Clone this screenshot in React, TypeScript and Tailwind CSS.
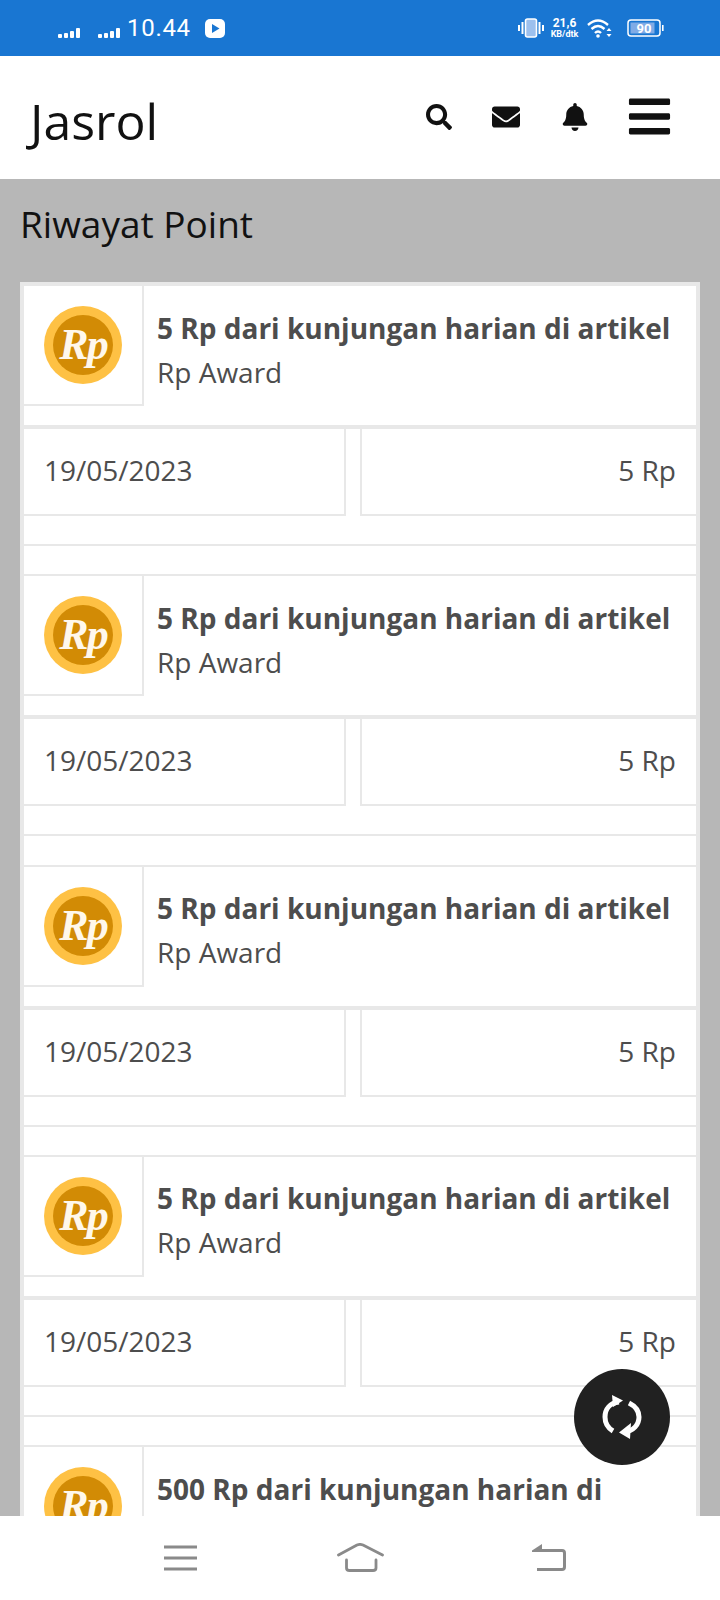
import React from 'react';
import { FaBars, FaBell, FaEnvelope, FaSearch } from 'react-icons/fa';

const rows = [
  { title: '5 Rp dari kunjungan harian di artikel', amount: '5 Rp' },
  { title: '5 Rp dari kunjungan harian di artikel', amount: '5 Rp' },
  { title: '5 Rp dari kunjungan harian di artikel', amount: '5 Rp' },
  { title: '5 Rp dari kunjungan harian di artikel', amount: '5 Rp' },
  { title: '500 Rp dari kunjungan harian di artikel', amount: '500 Rp' },
];

const Signal = () => (
  <svg width="23" height="10" viewBox="0 0 23 10" fill="white">
    <rect x="0" y="6" width="4" height="4" rx="1" />
    <rect x="6" y="5" width="4" height="5" rx="1" />
    <rect x="12" y="3" width="4" height="7" rx="1" />
    <rect x="18" y="0" width="4" height="10" rx="1" />
  </svg>
);

const StatusBar = () => (
  <div className="flex h-14 shrink-0 items-center bg-[#1976d2] pl-[58px] pr-[56px] text-white font-['Roboto',sans-serif]">
    <div className="mt-[10px]"><Signal /></div>
    <div className="ml-[17px] mt-[10px]"><Signal /></div>
    <span className="ml-[6px] text-[24px] font-normal leading-none tracking-[0.7px]">10.44</span>
    <svg className="ml-[14px]" width="20" height="19" viewBox="0 0 20 19">
      <rect width="20" height="19" rx="5" fill="white" />
      <path d="M7 5 L14.5 9.5 L7 14 Z" fill="#1976d2" />
    </svg>
    <div className="flex-1" />
    <svg width="26" height="20" viewBox="0 0 26 20" fill="none">
      <rect x="7.5" y="1" width="11" height="18" rx="2" fill="#9cc0ee" stroke="white" strokeWidth="1.6" />
      <path d="M4.5 4v12M21.5 4v12" stroke="white" strokeWidth="2" />
      <path d="M1 7v6M25 7v6" stroke="white" strokeWidth="2" />
    </svg>
    <div className="ml-[5px] flex w-[31px] flex-col items-center font-bold text-white">
      <span className="text-[12px] leading-[11px]">21,6</span>
      <span className="text-[9px] leading-[10px]">KB/dtk</span>
    </div>
    <svg className="ml-[7px]" width="26" height="20" viewBox="0 0 26 20" fill="none">
      <path d="M1 7 Q11 -2 21 7" stroke="white" strokeWidth="2.4" />
      <path d="M4.5 11 Q11 5 17.5 11" stroke="white" strokeWidth="2.4" />
      <path d="M8 15 Q11 12 14 15" stroke="white" strokeWidth="2.4" />
      <circle cx="11" cy="18" r="1.8" fill="white" />
      <path d="M22 10 l2.5 3 h-5 Z M22 19 l2.5 -3 h-5 Z" fill="white" />
    </svg>
    <svg className="ml-[14px]" width="37" height="18" viewBox="0 0 37 18" fill="none">
      <rect x="1" y="1" width="32" height="16" rx="3" stroke="white" strokeWidth="1.5" />
      <rect x="3.5" y="3.5" width="24" height="11" fill="#7fabe6" />
      <rect x="35" y="6" width="1.6" height="6" fill="white" />
      <text x="17" y="14" textAnchor="middle" fontSize="13" fontWeight="700" fill="white" fontFamily="Roboto, sans-serif">90</text>
    </svg>
  </div>
);

const Header = () => (
  <div className="flex h-[123px] shrink-0 items-center bg-white pl-[30px] pr-[47px] text-[#111111]">
    <span className="mt-[6px] text-[50px] leading-none">Jasrol</span>
    <div className="flex-1" />
    <div className="-mt-[2px] flex items-center">
      <FaSearch size={26} />
      <FaEnvelope size={28} className="ml-[40px]" />
      <FaBell size={28} className="ml-[41px]" />
      <FaBars size={47} className="ml-[37px]" />
    </div>
  </div>
);

const Coin = () => (
  <div className="flex h-[78px] w-[78px] items-center justify-center rounded-full bg-[#fec144]">
    <div className="flex h-[60px] w-[60px] items-center justify-center rounded-full bg-[#d28b05]">
      <span className="text-[44px] font-bold italic leading-none tracking-[-2px] text-[#fff8ec] font-['Liberation_Serif',serif]">Rp</span>
    </div>
  </div>
);

const PointRow = ({ title, amount }: { title: string; amount: string }) => (
  <div>
    <div className="flex h-[139px] items-start">
      <div className="border-b-2 border-r-2 border-[#e8e8e8] p-[20px]">
        <Coin />
      </div>
      <div className="min-w-0 flex-1 pl-[13px] pr-[10px] pt-[19.5px]">
        <p className="text-[28px] font-bold leading-[44px]">{title}</p>
        <p className="text-[28px] leading-[44px]">Rp Award</p>
      </div>
    </div>
    <div className="flex border-t-4 border-[#e8e8e8]">
      <div className="h-[87px] w-[322px] border-b-2 border-r-2 border-[#e8e8e8] pl-[20px] pt-[19px] text-[28px] leading-[45px]">19/05/2023</div>
      <div className="ml-[14px] h-[87px] flex-1 border-b-2 border-l-2 border-[#e8e8e8] pr-[20px] pt-[19px] text-right text-[28px] leading-[45px]">{amount}</div>
    </div>
    <div className="-mx-[2px] h-[30px] border-b-2 border-[#e8e8e8]" />
    <div className="-mx-[2px] h-[30.25px] border-b-2 border-[#e8e8e8]" />
  </div>
);

const NavBar = () => (
  <div className="flex h-[84px] shrink-0 items-start bg-white pl-[164px] pt-[27px]">
    <svg className="mt-[2px]" width="34" height="26" viewBox="0 0 34 26" stroke="#8a8a8a" strokeWidth="3" fill="none">
      <path d="M0 2h33M0 13h33M0 24h33" />
    </svg>
    <svg className="ml-[139px]" width="48" height="30" viewBox="0 0 48 30" stroke="#8a8a8a" strokeWidth="2.8" fill="none" strokeLinecap="round" strokeLinejoin="round">
      <path d="M1.5 12 L20 2 Q23 0.8 26 2 L45.5 12" />
      <path d="M9.5 17 V25 Q9.5 27.5 12.5 27.5 H36 Q39 27.5 39 25 V17" />
    </svg>
    <svg className="ml-[146px]" width="36" height="29" viewBox="0 0 36 29" fill="none">
      <path d="M10 7.5 H31 Q33.5 7.5 33.5 10 V24 Q33.5 26.5 31 26.5 H6" stroke="#8a8a8a" strokeWidth="3" />
      <path d="M1 7.5 L11 1 V9 H1 Z" fill="#8a8a8a" />
    </svg>
  </div>
);

const RefreshIcon = () => (
  <svg width="40" height="48" viewBox="0 0 40 48" fill="none">
    <path d="M17 9 C8 10 3 16 3 24 C3 30 6 35 11 38" stroke="white" strokeWidth="5" />
    <path d="M10 2 L21 7.5 L11 14 Z" fill="white" />
    <path d="M27 10 C33 13 37 18 37 24 C37 32 31 38 23 39" stroke="white" strokeWidth="5" />
    <path d="M29 30 L28 46 L17 39.5 Z" fill="white" />
  </svg>
);

export default function App() {
  return (
    <div className="relative flex h-[1600px] w-[720px] flex-col overflow-hidden bg-white font-['Open_Sans',sans-serif]">
      <StatusBar />
      <Header />
      <div className="min-h-0 flex-1 overflow-hidden bg-[#b7b7b7] px-[20px]">
        <h1 className="pt-[16px] pb-[30px] text-[37px] leading-[57px] text-[#111111]">Riwayat Point</h1>
        <div className="border-4 border-[#e8e8e8] bg-white text-[#4d4d4d]">
          {rows.map((row, i) => (
            <PointRow key={i} title={row.title} amount={row.amount} />
          ))}
        </div>
      </div>
      <NavBar />
      <button className="absolute left-[574px] top-[1369px] flex h-[96px] w-[96px] items-center justify-center rounded-full bg-[#212121]">
        <RefreshIcon />
      </button>
    </div>
  );
}
